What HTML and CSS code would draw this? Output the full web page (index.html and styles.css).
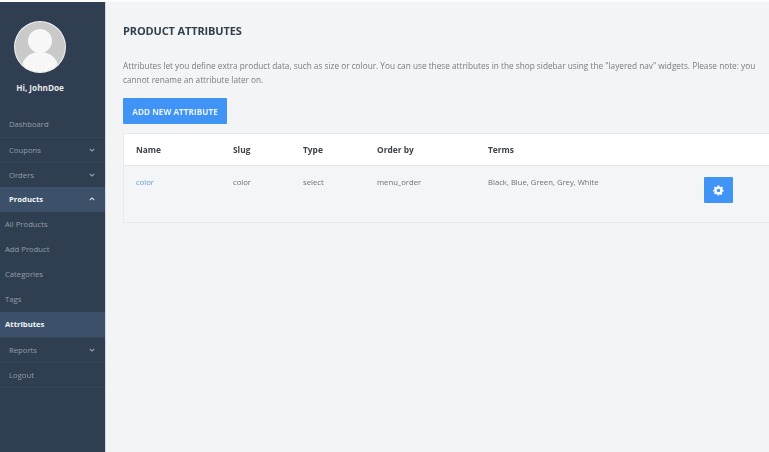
FILE: index.html
```html
<!DOCTYPE html>
<html lang="en">
<head>
<meta charset="utf-8">
<title>Product Attributes</title>
<link rel="stylesheet" href="styles.css">
</head>
<body>
<div class="app">
  <aside class="sidebar">
    <div class="profile">
      <svg class="avatar" viewBox="0 0 52 52" width="52" height="52" aria-hidden="true">
        <defs><clipPath id="c"><circle cx="26" cy="26" r="25"/></clipPath></defs>
        <circle cx="26" cy="26" r="26" fill="#f4f4f4"/>
        <circle cx="26" cy="26" r="25" fill="#c9c9c9"/>
        <g clip-path="url(#c)" fill="#f7f7f7">
          <circle cx="26" cy="20" r="12"/>
          <ellipse cx="26" cy="45" rx="17.500" ry="14"/>
        </g>
      </svg>
      <div class="hello">Hi, JohnDoe</div>
    </div>
    <nav class="menu">
      <a class="item">Dashboard</a>
      <a class="item lined">Coupons <svg class="chev" viewBox="0 0 8 5"><path d="M1 1l3 3 3-3"/></svg></a>
      <a class="item lined">Orders <svg class="chev" viewBox="0 0 8 5"><path d="M1 1l3 3 3-3"/></svg></a>
      <a class="item active">Products <svg class="chev" viewBox="0 0 8 5"><path d="M1 4l3-3 3 3"/></svg></a>
      <a class="item sub">All Products</a>
      <a class="item sub">Add Product</a>
      <a class="item sub">Categories</a>
      <a class="item sub">Tags</a>
      <a class="item sub active">Attributes</a>
      <a class="item lined">Reports <svg class="chev" viewBox="0 0 8 5"><path d="M1 1l3 3 3-3"/></svg></a>
      <a class="item lined">Logout</a>
    </nav>
  </aside>
  <main class="main">
    <h1 class="title">PRODUCT ATTRIBUTES</h1>
    <p class="intro">Attributes let you define extra product data, such as size or colour. You can use these attributes in the shop sidebar using the "layered nav" widgets. Please note: you cannot rename an attribute later on.</p>
    <a class="add">ADD NEW ATTRIBUTE</a>
    <div class="panel">
      <div class="row head">
        <span class="c-name">Name</span>
        <span class="c-slug">Slug</span>
        <span class="c-type">Type</span>
        <span class="c-order">Order by</span>
        <span class="c-terms">Terms</span>
      </div>
      <div class="row body">
        <a class="c-name link">color</a>
        <span class="c-slug">color</span>
        <span class="c-type">select</span>
        <span class="c-order">menu_order</span>
        <span class="c-terms">Black, Blue, Green, Grey, White</span>
        <a class="gear">
          <svg viewBox="0 0 24 24" width="11" height="11" aria-hidden="true"><path fill="#fff" fill-rule="evenodd" d="M10 1h4l.6 3.2 1.900.8 2.700-1.800 2.800 2.800-1.800 2.700.8 1.900L23 11v3l-3.200.6-.8 1.900 1.800 2.700-2.800 2.800-2.700-1.800-1.900.8L13 23h-3l-.6-3.200-1.900-.8-2.700 1.800-2.800-2.800 1.800-2.700-.8-1.900L0 14v-3l3-.6.8-1.900L2 5.800 4.800 3l2.700 1.800 1.900-.8zM12 8a4 4 0 1 0 0 8 4 4 0 0 0 0-8z"/></svg>
        </a>
      </div>
    </div>
  </main>
</div>
</body>
</html>
```
FILE: styles.css
```css
* { box-sizing: border-box; }
html, body { margin: 0; height: 100%; overflow: hidden; }
body { font-family: "Open Sans", "Liberation Sans", sans-serif; font-size: 7.7px; color: #666c70; background: #f2f4f5; }
.app { display: flex; height: 452px; width: 769px; border-top: 2px solid #fbfcfc; filter: blur(0.45px); }

.sidebar { width: 106px; flex: none; background: #2f3e50; border-right: 1px solid #d5d8da; }
.profile { display: flex; flex-direction: column; align-items: center; width: 80px; padding-top: 19px; height: 110px; }
.avatar { display: block; flex: none; }
.hello { margin-top: 9px; font-size: 8.2px; font-weight: 700; line-height: 12px; color: #e6e9ec; white-space: nowrap; }

.menu { display: flex; flex-direction: column; border-bottom: 1px solid #364658; }
.item { display: flex; align-items: center; justify-content: space-between; height: 25px; padding: 0 10px 1px 9px; color: #939eaa; font-size: 7.7px; }
.lined { border-top: 1px solid #364658; }
.item.active { background: #3c5069; color: #f2f4f6; font-weight: 700; }
.sub { padding-left: 5px; }
.chev { width: 6px; height: 4px; fill: none; stroke: #9aa5b1; stroke-width: 1.4; }
.active .chev { stroke: #dfe3e8; }

.main { flex: 1; min-width: 0; padding: 21px 0 0 17px; }
.title { margin: 0; font-size: 11px; line-height: 16px; font-weight: 700; color: #333e4b; letter-spacing: -0.14px; }
.intro { margin: 20px 0 0; width: 640px; font-size: 8.25px; line-height: 14px; color: #777d82; }
.add { display: flex; align-items: center; justify-content: center; margin-top: 11px; width: 104px; height: 26px; background: #3f94f5; border-radius: 1px; color: #eaf3fe; font-size: 8.2px; font-weight: 700; }
.panel { margin-top: 9px; border: 1px solid #e7e9ea; border-right: 0; }
.row { display: flex; }
.head { height: 32px; background: #fff; align-items: center; border-bottom: 1px solid #e6e9ea; font-weight: 700; color: #3d4349; font-size: 8.4px; }
.body { height: 56px; background: #f3f5f7; align-items: flex-start; padding-top: 10px; color: #6c7276; }
.row span, .row .link { display: block; flex: none; line-height: 12px; }
.c-name { width: 97px; margin-left: 12px; }
.c-slug { width: 70px; }
.c-type { width: 74px; }
.c-order { width: 111px; }
.c-terms { width: 216px; }
.link { color: #5a9fdc; }
.gear { display: flex; align-items: center; justify-content: center; flex: none; width: 29px; height: 26px; margin-top: 1px; background: #3f94f5; border-radius: 1px; }
```
